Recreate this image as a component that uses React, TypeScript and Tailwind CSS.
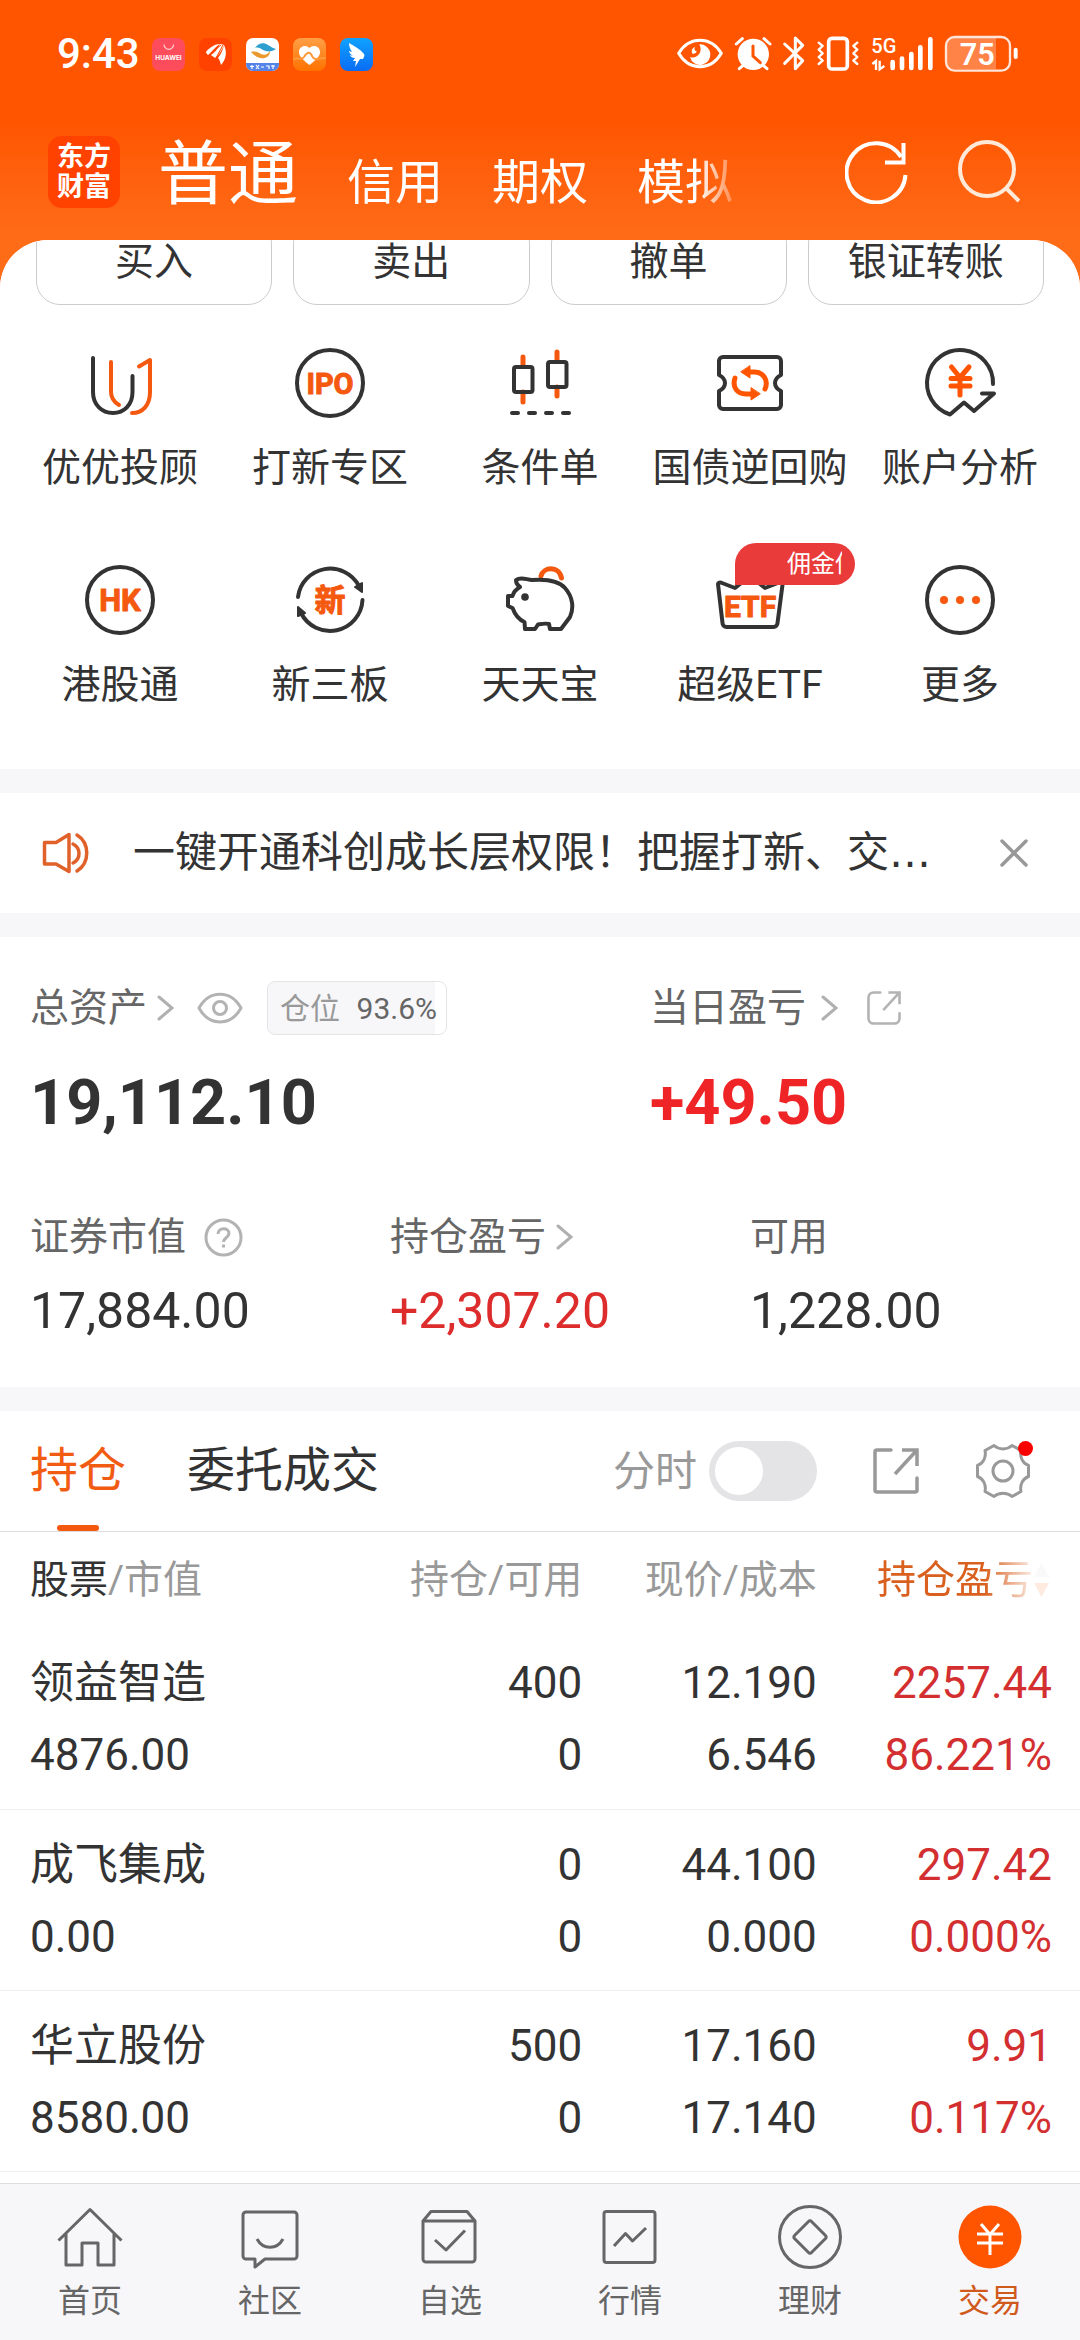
import type { ReactNode } from 'react';

const DARK = '#333333';
const ORANGE = '#f5590f';

/* ---------- status bar ---------- */

function AppBadges() {
  return (
    <div className="flex gap-[14px]">
      <svg className="h-[33px] w-[33px]" viewBox="0 0 33 33">
        <rect width="33" height="33" rx="8" fill="#fd4d5c" />
        <path d="M12 6.500a4.800 4.800 0 0 0 9.600 0" fill="none" stroke="#ffd0d0" strokeWidth="1.200" />
        <text x="16.500" y="22" textAnchor="middle" fontSize="6.500" fontWeight="700" fontFamily="Inter, sans-serif" fill="#fff">
          HUAWEI
        </text>
      </svg>
      <svg className="h-[33px] w-[33px]" viewBox="0 0 33 33">
        <rect width="33" height="33" rx="8" fill="#ff4200" />
        <path d="M7 14c2-3 8-8 14-8-5 3-6 6-12 11-1-1-2-2-2-3zM12 17c3-2 7-6 9-11 2 0 3 1 4 1-2 5-5 10-9 13-1-1-3-2-4-3zM19 20c3-4 5-8 6-13 4 8 1 16-3 20-1-3-1-5-3-7z" fill="#fff" />
        <path d="M11 16 22 7M17 20l7-13" stroke="#ff4200" strokeWidth="1" />
      </svg>
      <svg className="h-[33px] w-[33px]" viewBox="0 0 33 33">
        <defs>
          <clipPath id="cloudApp">
            <rect width="33" height="33" rx="7" />
          </clipPath>
        </defs>
        <g clipPath="url(#cloudApp)">
          <rect width="33" height="33" fill="#fff" />
          <rect y="25" width="33" height="8" fill="#5484e8" />
          <path d="M9 10c3-5 9-6 13-3 3 2 5 3 8 4-4 3-9 3-13 1-3-2-5-3-8-2z" fill="#2f9fd0" />
          <path d="M5 14c4-1 7 0 10 2 4 2 7 0 9-3 0 6-5 8-10 7-4-1-6-3-9-6z" fill="#ea9a2c" />
          <path d="M4 28.500h4M6 27v4M10 27l3 4M13 27l-3 4M15 29h3M20 28h3v3M25 28h4M27 27v4" stroke="#fff" strokeWidth="1.200" fill="none" />
        </g>
      </svg>
      <svg className="h-[33px] w-[33px]" viewBox="0 0 33 33">
        <defs>
          <linearGradient id="healthApp" x1="0" y1="0" x2="0" y2="1">
            <stop offset="0" stopColor="#ff9f45" />
            <stop offset="1" stopColor="#ff7200" />
          </linearGradient>
        </defs>
        <rect width="33" height="33" rx="8" fill="url(#healthApp)" />
        <path d="M16.500 27C9 21 6 18 6 14c0-6 7-8 10.500-4C20 6 27 8 27 14c0 4-3 7-10.500 13z" fill="#fff" />
        <path d="M0 21c5-2 8 2 11-2 3-5 6-6 8-1 3 6 8 1 14 2" fill="none" stroke="#ff9a3c" strokeWidth="2" />
      </svg>
      <svg className="h-[33px] w-[33px]" viewBox="0 0 33 33">
        <defs>
          <linearGradient id="dingApp" x1="0" y1="0" x2="0" y2="1">
            <stop offset="0" stopColor="#10a2ff" />
            <stop offset="1" stopColor="#0a6cf5" />
          </linearGradient>
        </defs>
        <rect width="33" height="33" rx="8" fill="url(#dingApp)" />
        <path d="M9 5c5 3 11 6 15 11 1 1 0 3-1 5h-3l-5 8 1-6h-3l2-3c-3 0-5-2-5-3l3 1c-3-2-4-4-4-5l3 1c-2-3-3-6-3-9z" fill="#fff" />
      </svg>
    </div>
  );
}

function StatusIcons() {
  return (
    <div className="flex items-center">
      <svg className="mr-[10px] h-9 w-12" viewBox="48 36 144 108">
        <path d="M56 88c32-52 96-52 128 0-32 54-96 54-128 0z" fill="none" stroke="#fff" strokeWidth="9" strokeLinejoin="round" />
        <path d="M118 61a31 31 0 1 1-28 38c16 8 42-12 28-38z" fill="#fff" />
        <path d="M105 68a17 17 0 0 0-9 20c5 4 13 0 14-6-7-2-8-8-5-14z" fill="#fff" />
      </svg>
      <svg className="mr-[9px] h-9 w-[38px]" viewBox="222 36 114 108">
        <circle cx="280" cy="91" r="47" fill="#fff" />
        <path d="M229 60l18-16M330 60l-18-16M238 134l14-12M321 134l-14-12" stroke="#fff" strokeWidth="9" strokeLinecap="round" />
        <path d="M279 66v30l22 20" fill="none" stroke="#ff5500" strokeWidth="9" strokeLinecap="round" />
      </svg>
      <svg className="mr-[9px] h-9 w-[26px]" viewBox="363 36 78 108">
        <path d="M374 60l54 50-22 24V42l22 22-54 54" fill="none" stroke="#fff" strokeWidth="9" strokeLinecap="round" strokeLinejoin="round" />
      </svg>
      <svg className="mr-[10px] h-9 w-11" viewBox="468 36 132 108">
        <rect x="506" y="43" width="56" height="92" rx="10" fill="none" stroke="#fff" strokeWidth="11" />
        <path d="M476 56l12 10-12 11 12 11-12 11 12 11-12 10M592 56l-12 10 12 11-12 11 12 11-12 11 12 10" fill="none" stroke="#fff" strokeWidth="7" strokeLinecap="round" strokeLinejoin="round" />
      </svg>
      <svg className="mr-[10px] h-9 w-16 overflow-visible" viewBox="630 36 192 108">
        <text x="634" y="86" fontSize="60" fontWeight="500" fontFamily="Roboto, sans-serif" fill="#fff">
          5G
        </text>
        <path d="M698 114v18M726 104v28M754 90v42M781 70v62M811 46v86" stroke="#fff" strokeWidth="14" strokeLinecap="round" />
        <path d="M637 120l11-9v27M659 110v26l14-10" fill="none" stroke="#fff" strokeWidth="7" />
      </svg>
      <svg className="h-9 w-[75px] overflow-visible" viewBox="852 36 225 108">
        <path d="M884 42h124v94h-124c-14 0-24-10-24-22V64c0-12 10-22 24-22z" fill="#ff8247" />
        <rect x="858" y="39" width="192" height="101" rx="26" fill="none" stroke="#fff" strokeOpacity="0.85" strokeWidth="7" />
        <rect x="1061" y="71" width="12" height="34" rx="6" fill="#fff" />
        <text x="952" y="123" textAnchor="middle" fontSize="92" fontWeight="600" fontFamily="Roboto, sans-serif" fill="#fff">
          75
        </text>
      </svg>
    </div>
  );
}

/* ---------- shortcut icons, drawn on a 72 x 72 box ---------- */

function Glyph({ children }: { children: ReactNode }) {
  return (
    <svg className="h-[72px] w-[72px] overflow-visible" viewBox="0 0 72 72" fill="none" stroke={DARK} strokeWidth="4" strokeLinecap="round" strokeLinejoin="round">
      {children}
    </svg>
  );
}

function GlyphText({ x = 36, y, size, children }: { x?: number; y: number; size: number; children: string }) {
  return (
    <text x={x} y={y} textAnchor="middle" fontSize={size} fontWeight="700" fontFamily="Roboto, 'Noto Sans CJK SC', sans-serif" fill={ORANGE} stroke={ORANGE} strokeWidth="1">
      {children}
    </text>
  );
}

const shortcuts: { label: string; icon: ReactNode; badge?: string }[] = [
  {
    label: '优优投顾',
    icon: (
      <Glyph>
        <path d="M9 11v34c0 13 9 21 20 21s19.500-8 19.500-21V29" />
        <g stroke={ORANGE}>
          <path d="M27 15v30c0 6 3 10 8 13" />
          <path d="M48 66c11 0 18-8 18-21V13l-11 6.500" />
        </g>
      </Glyph>
    ),
  },
  {
    label: '打新专区',
    icon: (
      <Glyph>
        <circle cx="36" cy="36" r="33" />
        <GlyphText y={47} size={29}>IPO</GlyphText>
      </Glyph>
    ),
  },
  {
    label: '条件单',
    icon: (
      <Glyph>
        <g stroke={ORANGE} strokeWidth="5">
          <path d="M19 10v9M19 45v10M53 5v9M53 40v9" />
        </g>
        <rect x="10" y="20" width="18.500" height="25" rx="2" />
        <rect x="44" y="15" width="18.500" height="25" rx="2" />
        <path d="M8 66h6M25 66h6M42 66h6M59 66h6" />
      </Glyph>
    ),
  },
  {
    label: '国债逆回购',
    icon: (
      <Glyph>
        <path d="M9 10h54a4 4 0 0 1 4 4v14c-8 4-8 12 0 16v14a4 4 0 0 1-4 4H9a4 4 0 0 1-4-4V44c8-4 8-12 0-16V14a4 4 0 0 1 4-4z" />
        <path d="M21 31c-3 9 2 16 11 16h6M51 42c4-9-2-17-11-17h-5" stroke="#ff5500" strokeWidth="5" />
        <path d="M36 19v12l-9-6zM37 41v12l9-6z" fill="#ff5500" stroke="#ff5500" strokeWidth="1" />
      </Glyph>
    ),
  },
  {
    label: '账户分析',
    icon: (
      <Glyph>
        <path d="M69 37A33 33 0 1 0 26 67.500L40 55.500l10 8.500 20-17.500H58" />
        <path d="M27.500 20l8.500 10.500L45 20M27 31.500h19M27 39h19M36 31v17" stroke="#ff5500" strokeWidth="5" />
      </Glyph>
    ),
  },
  {
    label: '港股通',
    icon: (
      <Glyph>
        <circle cx="36" cy="36" r="33" />
        <GlyphText y={47} size={31}>HK</GlyphText>
      </Glyph>
    ),
  },
  {
    label: '新三板',
    icon: (
      <Glyph>
        <path d="M4 33A32.500 32.500 0 0 1 65 22M68.500 36A32.500 32.500 0 0 1 7 49" />
        <path d="M68 28l-7-5 7-4zM4 43l7 6-7 3z" fill={DARK} strokeWidth="2" />
        <GlyphText y={47} size={31}>新</GlyphText>
      </Glyph>
    ),
  },
  {
    label: '天天宝',
    icon: (
      <Glyph>
        <path d="M37 12c2-9 18-11 20.500 2" stroke={ORANGE} strokeWidth="5" />
        <path d="M12 16c5-4 11 0 16 0 14-1 26 0 33 8 8 9 9 20 5 29l-9 12H46l-1-5c-4-1-8 0-11 .500L31 65H21l-.500-7c-5-2-9-6-12-14l-4.500-2V32h4.500c1-4 4-7 7.500-9-3-2-4-4-4-7z" />
        <circle cx="21" cy="33" r="3.800" fill={DARK} stroke="none" />
      </Glyph>
    ),
  },
  {
    label: '超级ETF',
    badge: '佣金低',
    icon: (
      <Glyph>
        <path d="M4 20l4.500 39a4 4 0 0 0 4 4h47a4 4 0 0 0 4-4L69 17l-18 7-15-12-15 12-13-5c-2-1-4 0-4 1z" />
        <GlyphText y={53} size={30}>ETF</GlyphText>
      </Glyph>
    ),
  },
  {
    label: '更多',
    icon: (
      <Glyph>
        <circle cx="36" cy="36" r="33" />
        <g fill={ORANGE} stroke="none">
          <circle cx="20" cy="36" r="4" />
          <circle cx="36" cy="36" r="4" />
          <circle cx="52" cy="36" r="4" />
        </g>
      </Glyph>
    ),
  },
];

/* ---------- small shared icons ---------- */

function Chevron() {
  return (
    <svg className="h-[26px] w-[17px]" viewBox="0 0 17 26" fill="none" stroke="#b0b0b0" strokeWidth="3" strokeLinecap="round">
      <path d="M2 2l13 11L2 24" />
    </svg>
  );
}

function Share({ className, color, radius }: { className: string; color: string; radius: number }) {
  return (
    <svg className={className} viewBox="0 0 46 46" fill="none" stroke={color} strokeWidth="3.500" strokeLinecap="round">
      <path d={`M18 2H${2 + radius}a${radius} ${radius} 0 0 0-${radius} ${radius}V${44 - radius}a${radius} ${radius} 0 0 0 ${radius} ${radius}H${44 - radius}a${radius} ${radius} 0 0 0 ${radius}-${radius}V30`} />
      <path d="M29 2h15v16M44 2L22 26" strokeLinecap="butt" />
    </svg>
  );
}

/* ---------- data ---------- */

const holdings = [
  { name: '领益智造', value: '4876.00', hold: '400', free: '0', price: '12.190', cost: '6.546', gain: '2257.44', pct: '86.221%' },
  { name: '成飞集成', value: '0.00', hold: '0', free: '0', price: '44.100', cost: '0.000', gain: '297.42', pct: '0.000%' },
  { name: '华立股份', value: '8580.00', hold: '500', free: '0', price: '17.160', cost: '17.140', gain: '9.91', pct: '0.117%' },
];

function NavGlyph({ children }: { children: ReactNode }) {
  return (
    <svg className="h-[72px] w-[72px]" viewBox="0 0 72 72" fill="none" stroke="#666666" strokeWidth="3" strokeLinejoin="round">
      {children}
    </svg>
  );
}

const tabs: { label: string; active?: boolean; icon: ReactNode }[] = [
  {
    label: '首页',
    icon: (
      <NavGlyph>
        <path d="M4.500 39.500L36 8.500l31.500 31M12 33v31h16V42h16v22h16V33" />
      </NavGlyph>
    ),
  },
  {
    label: '社区',
    icon: (
      <NavGlyph>
        <path d="M12 11h48a3 3 0 0 1 3 3v41a3 3 0 0 1-3 3H31l-10 8v-8h-9a3 3 0 0 1-3-3V14a3 3 0 0 1 3-3z" />
        <path d="M23 38c6 11 20 11 26 0" />
      </NavGlyph>
    ),
  },
  {
    label: '自选',
    icon: (
      <NavGlyph>
        <path d="M9 20v38a3 3 0 0 0 3 3h46a3 3 0 0 0 3-3V20l-8-9.500H17zM9 20h52M21 39l11 10 19-19.500" />
      </NavGlyph>
    ),
  },
  {
    label: '行情',
    icon: (
      <NavGlyph>
        <rect x="10" y="10.500" width="51" height="51" rx="2.500" />
        <path d="M20 45l11.500-12.500L38.500 40 52 27" />
      </NavGlyph>
    ),
  },
  {
    label: '理财',
    icon: (
      <NavGlyph>
        <circle cx="36" cy="36" r="30.500" />
        <path d="M34.500 20.500a2 2 0 0 1 3 0l14 14a2 2 0 0 1 0 3l-14 14a2 2 0 0 1-3 0l-14-14a2 2 0 0 1 0-3z" />
      </NavGlyph>
    ),
  },
  {
    label: '交易',
    active: true,
    icon: (
      <NavGlyph>
        <circle cx="36" cy="36" r="31.500" fill="#ff5500" stroke="none" />
        <path d="M27 23l9 10.500L45 23M23 33h26M23 42h26M36 33v21" stroke="#fff" />
      </NavGlyph>
    ),
  },
];

export default function App() {
  return (
    <div className="flex h-screen flex-col bg-[#ff6c18] font-[Roboto,'Noto_Sans_CJK_SC',sans-serif] text-[#333333]">
      <header className="bg-linear-to-b from-[#ff5500] from-50% to-[#ff6c18] pt-9 pb-8 text-white">
        <div className="flex h-9 items-center justify-between pr-[61px] pl-[57px]">
          <div className="flex items-center gap-3">
            <time className="text-[42px] leading-9 font-medium">9:43</time>
            <AppBadges />
          </div>
          <StatusIcons />
        </div>
        <div className="mt-16 flex h-[72px] items-center pr-[60px] pl-12">
          <div className="flex h-[72px] w-[72px] shrink-0 flex-col items-center justify-center rounded-[14px] bg-[#ff4200] text-[27px] leading-[30px] font-bold">
            <span>东方</span>
            <span>财富</span>
          </div>
          <nav className="mt-1.5 ml-[38px] flex flex-1 items-baseline gap-[49px] [mask-image:linear-gradient(to_right,black_92%,transparent)] whitespace-nowrap">
            <button className="text-[70px] leading-[84px]">普通</button>
            <button className="text-[48px] leading-[60px]">信用</button>
            <button className="text-[48px] leading-[60px]">期权</button>
            <button className="text-[48px] leading-[60px]">模拟</button>
          </nav>
          <button aria-label="刷新" className="ml-[100px]">
            <svg className="h-16 w-16" viewBox="0 0 64 64" fill="none" stroke="#fff" strokeWidth="4">
              <path d="M60.500 35A29.500 29.500 0 1 1 56 17M58.500 3v19.500H40" />
            </svg>
          </button>
          <button aria-label="搜索" className="ml-[47px]">
            <svg className="h-16 w-16" viewBox="0 0 64 64" fill="none" stroke="#ffe9d8" strokeWidth="4">
              <circle cx="31" cy="29" r="27" />
              <path d="M50 48l13 13" />
            </svg>
          </button>
        </div>
      </header>

      <main className="min-h-0 flex-1 overflow-hidden rounded-t-[48px] bg-[#f7f7fa]">
        <section className="bg-white pb-[60px]">
          <div className="flex h-[65px] items-end gap-[21px] overflow-hidden px-9">
            {['买入', '卖出', '撤单', '银证转账'].map((t) => (
              <button key={t} className="h-[86px] flex-1 rounded-3xl border border-[#cccccc] text-[39px] leading-[84px]">
                {t}
              </button>
            ))}
          </div>
          <div className="mt-[42px] grid grid-cols-5 gap-y-[72px] px-[15px]">
            {shortcuts.map((s) => (
              <button key={s.label} className="relative flex flex-col items-center gap-[25px]">
                {s.icon}
                <span className="text-[39px] leading-[48px] whitespace-nowrap">{s.label}</span>
                {s.badge && (
                  <span className="absolute -top-[21px] left-[90px] h-[42px] w-[120px] rounded-[21px] rounded-bl-none bg-[#ea3b3b] pr-[13px] pl-[52px] text-left text-[24px] leading-[42px] text-white">
                    <span className="block overflow-hidden whitespace-nowrap">{s.badge}</span>
                  </span>
                )}
              </button>
            ))}
          </div>
        </section>

        <section className="mt-6 flex h-[120px] items-center bg-white pr-[52px] pl-[42px]">
          <svg className="h-12 w-12 shrink-0" viewBox="0 0 48 48" fill="none" stroke="#e0622a" strokeWidth="3.500" strokeLinecap="round" strokeLinejoin="round">
            <path d="M2.500 13.500H14L27 5.500v37L14 35H2.500zM31 15c8 4 8 15 0 19M35 6c13 8 13 28 0 36" />
          </svg>
          <p className="ml-[43px] min-w-0 flex-1 truncate text-[42px] leading-[60px]">
            一键开通科创成长层权限！把握打新、交<span className="font-['DejaVu_Sans']">…</span>
          </p>
          <button aria-label="关闭" className="ml-[60px]">
            <svg className="h-7 w-7" viewBox="0 0 28 28" stroke="#999999" strokeWidth="3.500" strokeLinecap="round">
              <path d="M2 2l24 24M26 2L2 26" />
            </svg>
          </button>
        </section>

        <section className="mt-6 bg-white px-[30px] pt-11 pb-[46px]">
          <div className="grid grid-cols-[155fr_100fr]">
            <div>
              <div className="flex h-[54px] items-center text-[39px] text-[#666666]">
                <a href="#assets" className="flex items-center gap-[10px]">
                  总资产 <Chevron />
                </a>
                <button aria-label="隐藏金额" className="ml-[23px]">
                  <svg className="h-8 w-[46px]" viewBox="0 0 46 32" fill="none" stroke="#b3b3b3" strokeWidth="3">
                    <path d="M2 16C12-2.500 34-2.500 44 16 34 34.500 12 34.500 2 16z" strokeLinejoin="round" />
                    <circle cx="23" cy="16" r="6.500" />
                  </svg>
                </button>
                <span className="ml-6 flex h-[54px] w-[180px] items-center justify-between rounded-lg border border-[#e5e5e5] bg-linear-to-r from-[#f7f7fa] from-94% to-white to-94% pr-[9px] pl-3 text-[30px]">
                  <span className="text-[#999999]">仓位</span>
                  <span>93.6%</span>
                </span>
              </div>
              <p className="mt-8 text-[63px] leading-[72px] font-bold">19,112.10</p>
            </div>
            <div>
              <div className="flex h-[54px] items-center text-[39px] text-[#666666]">
                <a href="#today" className="flex items-center gap-[15px]">
                  当日盈亏 <Chevron />
                </a>
                <button aria-label="分享当日盈亏" className="ml-[29px]">
                  <Share className="h-[34px] w-[34px]" color="#b3b3b3" radius={7} />
                </button>
              </div>
              <p className="mt-8 text-[63px] leading-[72px] font-bold text-[#ee2427]">+49.50</p>
            </div>
          </div>
          <div className="mt-[74px] grid grid-cols-[6fr_6fr_5fr]">
            <div>
              <div className="flex h-12 items-center gap-[18px] text-[39px] text-[#666666]">
                证券市值
                <button aria-label="说明">
                  <svg className="h-[39px] w-[39px]" viewBox="0 0 39 39" fill="none" stroke="#b3b3b3" strokeWidth="3">
                    <circle cx="19.500" cy="19.500" r="17.500" />
                    <path d="M14 16c0-7 11-7 11-.500 0 4-5.500 4-5.500 8.500M19.500 26.500v3" />
                  </svg>
                </button>
              </div>
              <p className="mt-5 text-[50px] leading-[60px]">17,884.00</p>
            </div>
            <div>
              <a href="#profit" className="flex h-12 items-center gap-[10px] text-[39px] text-[#666666]">
                持仓盈亏 <Chevron />
              </a>
              <p className="mt-5 text-[50px] leading-[60px] text-[#dd2c2c]">+2,307.20</p>
            </div>
            <div>
              <div className="flex h-12 items-center text-[39px] text-[#666666]">可用</div>
              <p className="mt-5 text-[50px] leading-[60px]">1,228.00</p>
            </div>
          </div>
        </section>

        <section className="mt-6 bg-white">
          <div className="flex h-[121px] items-stretch border-b border-[#dddddd] pr-[50px] pl-[30px]">
            <button className="relative text-[48px] text-[#f25c12]">
              持仓
              <span className="absolute bottom-0 left-1/2 h-[6px] w-[42px] -translate-x-1/2 rounded-full bg-[#f5590f]" />
            </button>
            <button className="ml-[61px] text-[48px]">委托成交</button>
            <div className="ml-auto flex items-center">
              <label className="flex items-center gap-[12px] text-[42px] text-[#999999]">
                分时
                <input
                  type="checkbox"
                  role="switch"
                  className="h-[60px] w-[108px] appearance-none rounded-full bg-[#e4e4e6] p-[6px] before:block before:h-12 before:w-12 before:rounded-full before:bg-white checked:bg-[#ff5500] checked:before:ml-12"
                />
              </label>
              <button aria-label="分享持仓" className="ml-[56px]">
                <Share className="h-[46px] w-[46px]" color="#999999" radius={2} />
              </button>
              <button aria-label="设置" className="relative ml-[57px]">
                <svg className="h-[54px] w-[54px]" viewBox="0 0 54 54" fill="none" stroke="#999999" strokeWidth="3" strokeLinejoin="round">
                  <path d="M18 1.500c5 4.500 13 4.500 18 0l9 5c-1.500 7 2 13 7.500 15v11c-5.500 2-9 8-7.500 15l-9 5c-5-4.500-13-4.500-18 0l-9-5c1.500-7-2-13-7.500-15v-11C7 19.500 10.500 13.500 9 6.500z" />
                  <circle cx="27" cy="27" r="10" />
                </svg>
                <span className="absolute -top-[3px] -right-[3px] h-[15px] w-[15px] rounded-full bg-[#fb0000]" />
              </button>
            </div>
          </div>

          <table className="w-full table-fixed">
            <colgroup>
              <col className="w-[32%]" />
              <col className="w-[22%]" />
              <col className="w-[22%]" />
              <col className="w-[24%]" />
            </colgroup>
            <thead>
              <tr className="h-24 text-right text-[39px] whitespace-nowrap text-[#999999]">
                <th className="p-0 pl-[30px] text-left font-normal">
                  <span className="text-[#333333]">股票</span>/市值
                </th>
                <th className="p-0 pr-px font-normal">持仓/可用</th>
                <th className="p-0 pr-1 font-normal">现价/成本</th>
                <th className="p-0 pr-[30px] font-normal text-[#d9601e]">
                  <button className="inline-flex items-center [mask-image:linear-gradient(to_right,black_62%,rgba(0,0,0,0.12)_90%)]">
                    持仓盈亏
                    <svg className="h-9 w-[17px]" viewBox="0 0 17 36">
                      <path d="M8.500 1L16 15H1z" fill="#cccccc" />
                      <path d="M8.500 35L16 21H1z" fill="#ff5500" />
                    </svg>
                  </button>
                </th>
              </tr>
            </thead>
            <tbody>
              {holdings.map((h) => (
                <tr key={h.name} className="h-[181px] border-b border-[#eeeeee] text-right text-[44px] leading-[72px]">
                  <td className="p-0 pt-[2px] pl-[30px] text-left">
                    <div>{h.name}</div>
                    <div>{h.value}</div>
                  </td>
                  <td className="p-0 pt-[2px] pr-px">
                    <div>{h.hold}</div>
                    <div>{h.free}</div>
                  </td>
                  <td className="p-0 pt-[2px] pr-1">
                    <div>{h.price}</div>
                    <div>{h.cost}</div>
                  </td>
                  <td className="p-0 pt-[2px] pr-7 text-[#d32f31]">
                    <div>{h.gain}</div>
                    <div>{h.pct}</div>
                  </td>
                </tr>
              ))}
            </tbody>
          </table>
          <div className="h-12" />
        </section>
      </main>

      <nav className="grid grid-cols-6 border-t border-[#dddddd] bg-[#f7f7fa] pt-[17px] pb-[19px]">
        {tabs.map((t) => (
          <a key={t.label} href={`#${t.label}`} className="flex flex-col items-center gap-2">
            {t.icon}
            <span className={t.active ? 'text-[32px] leading-10 text-[#d05a1c]' : 'text-[32px] leading-10 text-[#666666]'}>{t.label}</span>
          </a>
        ))}
      </nav>
    </div>
  );
}
